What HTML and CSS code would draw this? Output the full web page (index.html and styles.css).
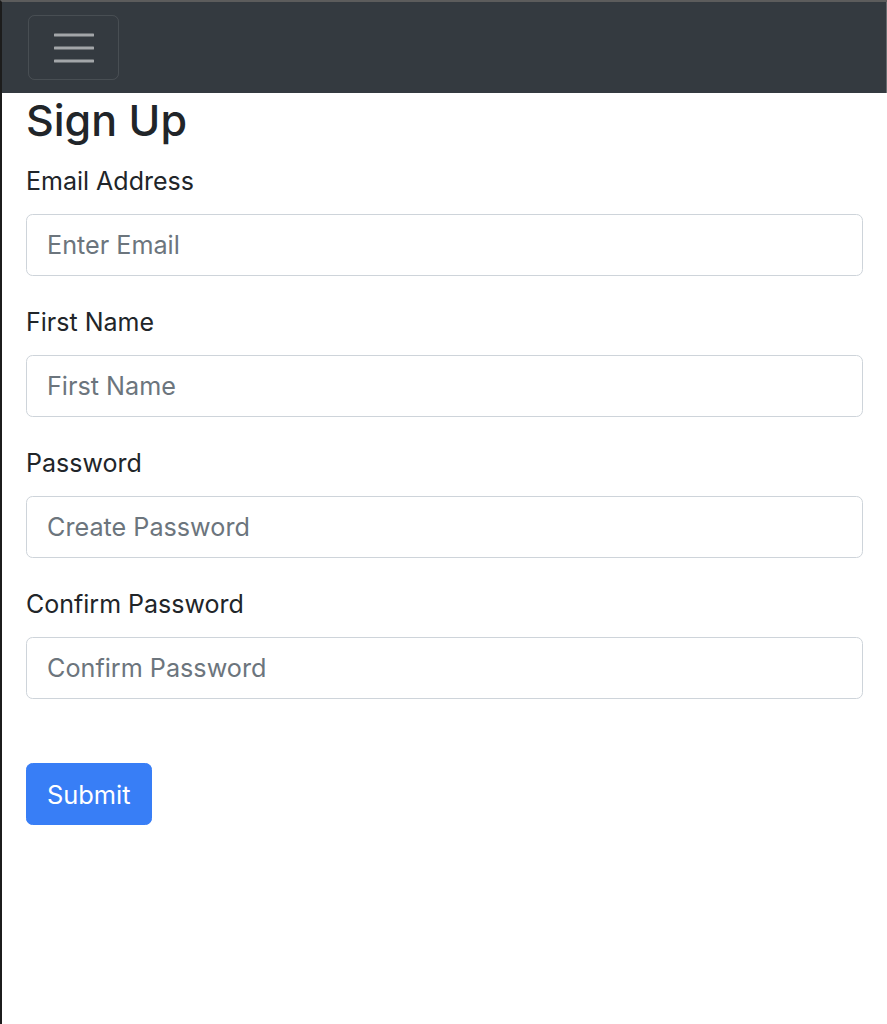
FILE: index.html
```html
<!DOCTYPE html>
<html lang="en">
<head>
<meta charset="utf-8">
<title>Sign Up</title>
<link rel="stylesheet" href="styles.css">
</head>
<body>
<div class="page">
  <nav class="navbar">
    <button class="toggler" type="button" aria-label="Toggle navigation">
      <svg class="toggler-icon" width="40" height="30" viewBox="0 0 40 30" aria-hidden="true">
        <path d="M1 2H39M1 15H39M1 28H39" stroke="rgba(255,255,255,0.55)" stroke-width="3" stroke-linecap="round"/>
      </svg>
    </button>
  </nav>
  <main class="container">
    <h3 class="title">Sign Up</h3>
    <form class="form">
      <div class="group">
        <label class="label" for="email">Email Address</label>
        <input class="input" id="email" type="email" placeholder="Enter Email">
      </div>
      <div class="group">
        <label class="label" for="fname">First Name</label>
        <input class="input" id="fname" type="text" placeholder="First Name">
      </div>
      <div class="group">
        <label class="label" for="pw">Password</label>
        <input class="input" id="pw" type="password" placeholder="Create Password">
      </div>
      <div class="group">
        <label class="label" for="pw2">Confirm Password</label>
        <input class="input" id="pw2" type="password" placeholder="Confirm Password">
      </div>
      <div class="actions">
        <button class="btn" type="submit">Submit</button>
      </div>
    </form>
  </main>
</div>
</body>
</html>
```
FILE: styles.css
```css
* { box-sizing: border-box; }
html, body { margin: 0; padding: 0; }
body {
  background: #ffffff;
  font-family: Inter, "Liberation Sans", Arial, sans-serif;
  font-size: 25px;
  line-height: 1.5;
  color: #212529;
}
.page {
  min-height: 1024px;
  border-top: 2px solid #5c5c5c;
  border-left: 2px solid #1c1c1c;
}
.navbar {
  display: flex;
  align-items: center;
  background: #343a40;
  padding: 13px 26px 13px;
  border-right: 1px solid #6a6d70;
}
.toggler {
  width: 91px;
  height: 65px;
  display: flex;
  align-items: center;
  justify-content: center;
  background: transparent;
  border: 1.6px solid rgba(255,255,255,0.1);
  border-radius: 6.5px;
  padding: 0;
}
.toggler-icon { display: block; }
.container {
  padding: 0 24px;
}
.title {
  margin: 0 0 13px;
  font-size: 43px;
  font-weight: 500;
  line-height: 55px;
}
.form { display: flex; flex-direction: column; }
.group {
  display: flex;
  flex-direction: column;
  margin-bottom: 26px;
}
.label {
  display: block;
  margin-bottom: 13px;
  line-height: 40px;
}
.input {
  display: block;
  width: 100%;
  height: 62px;
  padding: 6px 20px;
  font-family: inherit;
  font-size: 25.2px;
  color: #495057;
  background: #fff;
  border: 1.6px solid #ced4da;
  border-radius: 6.5px;
}
.input::placeholder { color: #6c757d; opacity: 1; }
.actions {
  margin-top: 38px;
}
.btn {
  height: 62px;
  padding: 0 20px;
  font-family: inherit;
  font-size: 25.4px;
  color: #fff;
  background: #387ef6;
  border: 1.6px solid #387ef6;
  border-radius: 6.5px;
}
```
